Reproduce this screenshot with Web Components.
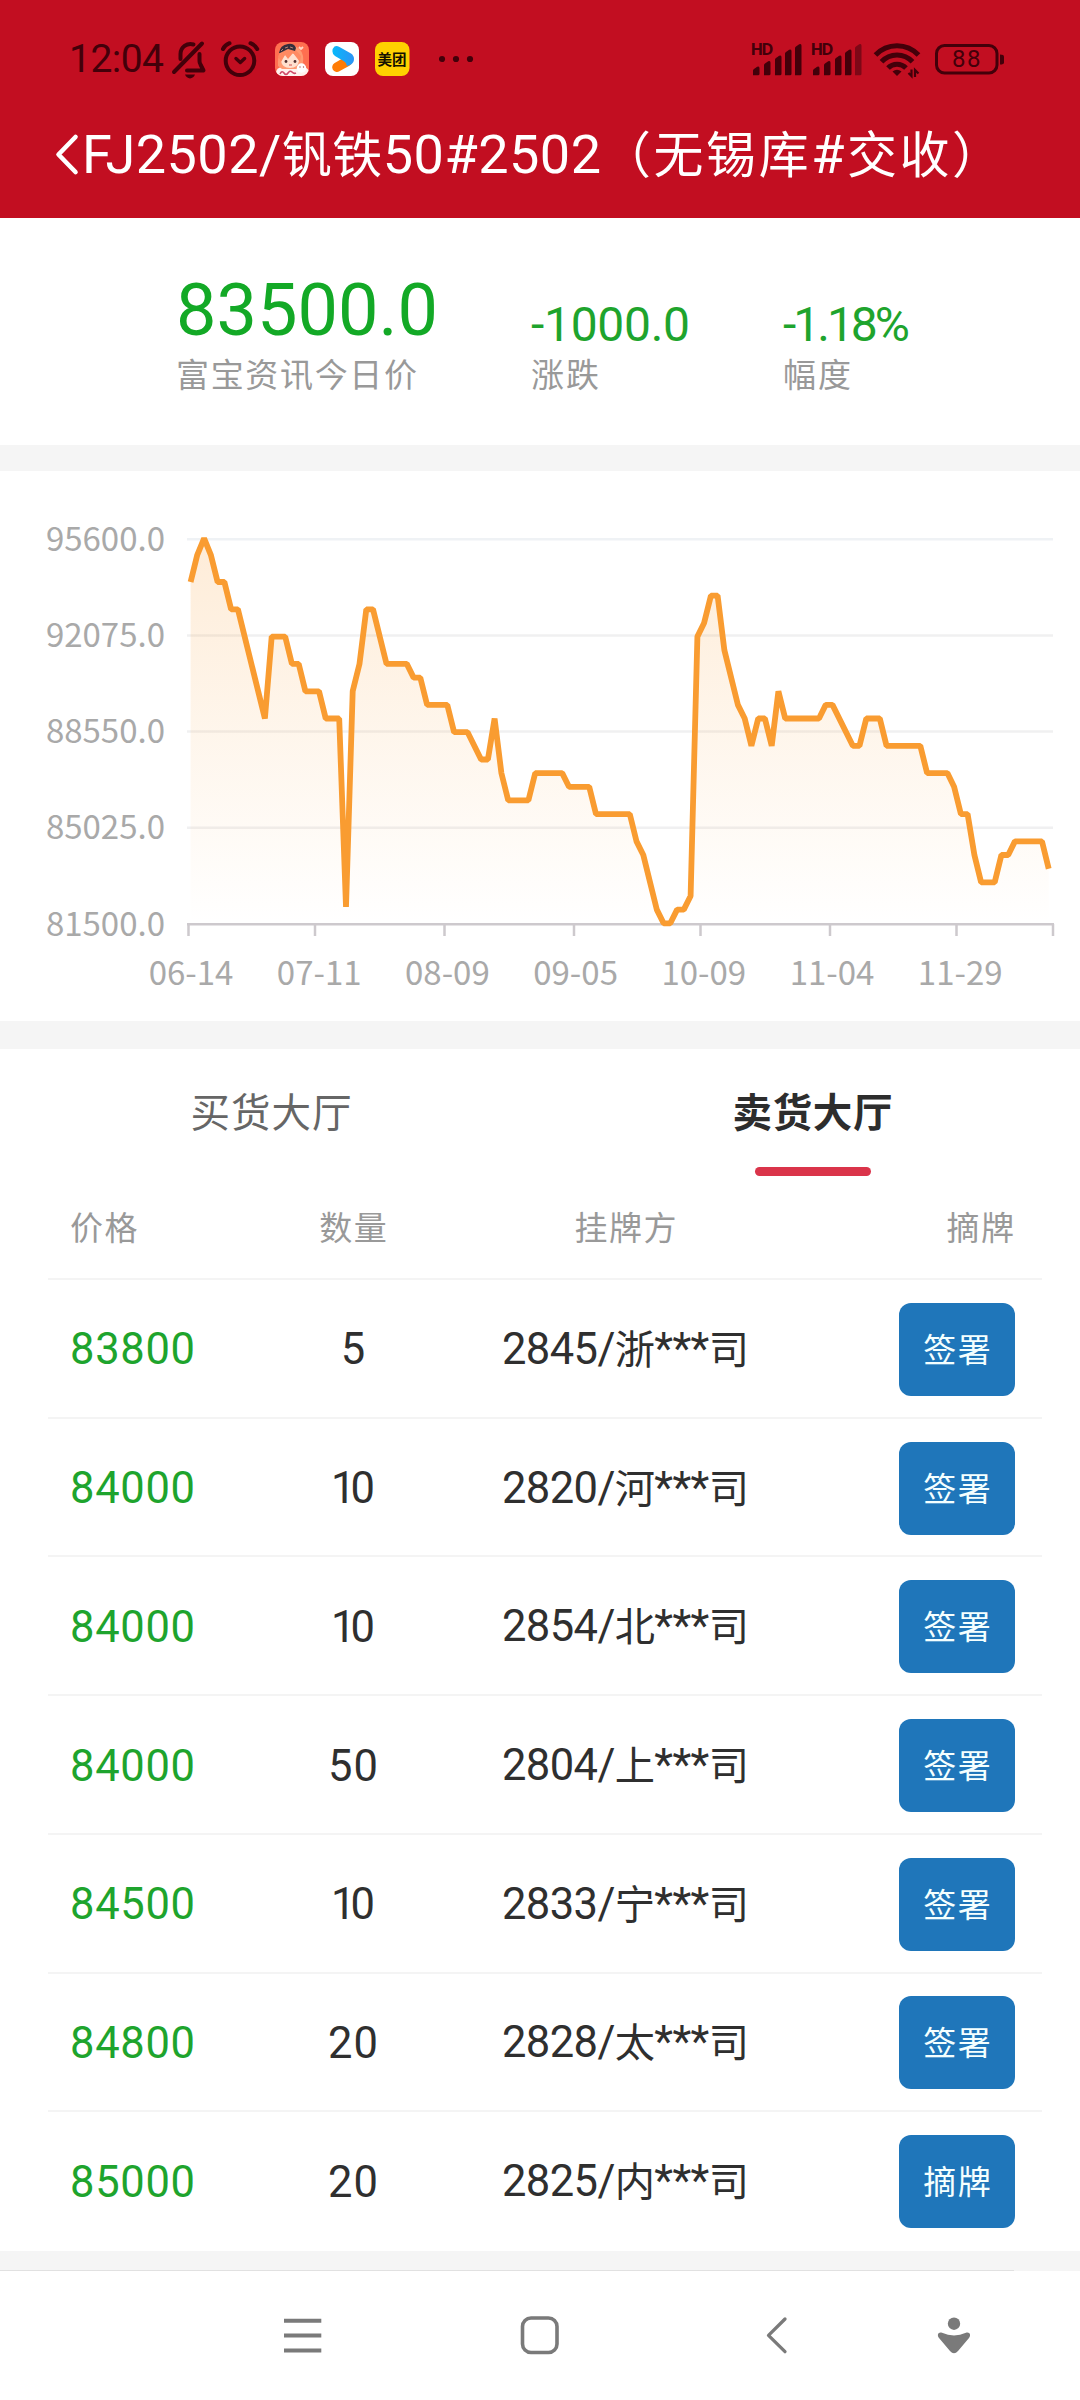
<!DOCTYPE html>
<html lang="zh-CN">
<head>
<meta charset="utf-8">
<title>FJ2502</title>
<style>
html,body{margin:0;background:#fff}
body{width:1080px;height:2400px;overflow:hidden;font-family:"Open Sans","Noto Sans CJK SC",sans-serif;color:#2f2f2f}
</style>
</head>
<body>
<app-page></app-page>
<script>
class Base extends HTMLElement {
  constructor() { super(); this.attachShadow({ mode: 'open' }); }
  render(html) { this.shadowRoot.innerHTML = html; }
}

// Text set to a given advance width by spacing its letters.
customElements.define('fit-text', class extends Base {
  connectedCallback() {
    this.render('<style>:host{display:inline-block;white-space:nowrap}span{display:inline-block}::slotted(i){font-style:normal;font-size:.925em}</style><span><slot></slot></span>');
    const w = +this.getAttribute('w'), span = this.shadowRoot.querySelector('span');
    const n = [...this.textContent].length;
    const ls = n > 1 ? (w - span.getBoundingClientRect().width) / (n - 1) : 0;
    span.style.letterSpacing = ls + 'px';
    span.style.marginRight = -ls + 'px';
  }
});

customElements.define('status-bar', class extends Base {
  connectedCallback() {
    const c = '#43000a';
    const bars = (dx, dim) => [[753,67],[764,61.5],[775,56],[785,50],[795,44.5]].map(([x, y], i) =>
      `<path d="M${x + dx} 75.2V${y + 3.5}q0-1 1-1.6l3.2-2.2q2.3-1 2.3 1.500V73.700q0 1.500-1.500 1.500z" fill="${dim && i === 4 ? '#7d0817' : c}"/>`).join('');
    const hd = dx => `<text x="${750.500 + dx}" y="55.300" font-size="16.500" font-weight="700" fill="${c}" textLength="23">HD</text>`;
    this.render(`
<style>
:host{display:flex;height:118px;align-items:flex-start;padding:0 76px 0 69px;box-sizing:border-box;color:${c}}
.time{font:39px/119px Roboto,sans-serif;width:102px;flex:none}
svg{flex:none;display:block;margin-top:38px;font-family:"Open Sans","Noto Sans CJK SC",sans-serif}
.sp{flex:1}
</style>
<div class="time"><fit-text w="95">12:04</fit-text></div>
<svg width="38" height="42" viewBox="171 38 38 42" fill="none" stroke="${c}" stroke-width="4" stroke-linecap="round" stroke-linejoin="round">
 <path d="M174 72L202 43.500M180.500 59V54a10 10 0 0 1 13-9.500M199.500 54V61q0 2 1 3.500L203.500 70.500H187"/><path d="M185 74.600h10q-1.500 3.800-5 3.800t-5-3.800z" fill="${c}" stroke="none"/></svg>
<svg width="66" height="42" viewBox="209 38 66 42" fill="none" stroke="${c}" stroke-width="4" stroke-linecap="round" stroke-linejoin="round">
 <circle cx="240" cy="60.700" r="14.300"/><path d="M223 49q2-4 6.500-5.800M250.500 43.200q4.700 1.800 6.700 5.800" /><path d="M236 58.500l4.300 4 4.300-4" stroke-width="3.400"/></svg>
<svg width="50" height="42" viewBox="275 38 50 42">
 <defs><clipPath id="a"><rect x="275" y="42" width="34" height="34" rx="8"/></clipPath></defs>
 <g clip-path="url(#a)"><rect x="275" y="42" width="34" height="34" fill="#ff6f50"/>
 <path d="M276 76q-1-9 7-9l20 0q7 1 7 9z" fill="#fff2ee"/>
 <path d="M278 66q-1-16 10-20 12-2 15 10 1 7-2 11l-5 2H282z" fill="#ff9a72"/>
 <path d="M281 61q2-7 10-8 7 1 8 8-1 7-9 7-8 0-9-7z" fill="#ffe0cf"/>
 <path d="M278 56l3 6 4-7 3 4 5-6 7 9 1-6-6-7-11 1z" fill="#ff8a62"/>
 <path d="M279 53q1-8 9-9 6-1 8 4l-1 3-7-2-8 4z" fill="#352e3c"/><path d="M281 51l2-2M285 48l3-1M290 47l3 1" stroke="#b98473" stroke-width="1"/>
 <circle cx="286" cy="61.500" r="1.400" fill="#512f30"/><circle cx="295" cy="61.500" r="1.400" fill="#512f30"/><path d="M289 65h3" stroke="#d64e4c"/>
 <circle cx="301.500" cy="68" r="4.700" fill="#fff"/><circle cx="300" cy="67" r=".7" fill="#a55"/><circle cx="303.500" cy="67" r=".7" fill="#a55"/>
 <path d="M299 47l2 2 2-2" stroke="#ffd8c8" stroke-width="1.800" fill="none"/>
 <path d="M280 74q2-4 4-1t4 0 4-1 4 1" stroke="#cf4a68" stroke-width="1.600" fill="none"/></g></svg>
<svg width="50" height="42" viewBox="325 38 50 42">
 <defs><linearGradient id="b" x1="0" x2="1"><stop offset="0" stop-color="#07b9fb"/><stop offset="1" stop-color="#2d93f4"/></linearGradient></defs>
 <rect x="325" y="42" width="34" height="34" rx="8" fill="#fff"/>
 <path d="M337 67.200L347 61.500" stroke="#ff7b05" stroke-width="9.600" stroke-linecap="round"/>
 <path d="M334.500 46.500q2-1 5 .4l11.500 6.600q3 2 3 5.500 0 4-4 6l-3 1q0-3-3-4.800l-9-5.200q-2.600-1.700-2.600-4.700t2.100-4.800z" fill="url(#b)"/></svg>
<svg width="64" height="42" viewBox="375 38 64 42"><rect x="375" y="42" width="34.500" height="34" rx="8" fill="#ffd100"/>
 <text x="377.500" y="64.500" font-size="14.500" font-weight="700" fill="#151100" textLength="29">美团</text></svg>
<svg width="36" height="42" viewBox="439 38 36 42" fill="${c}"><circle cx="442" cy="59" r="3.100"/><circle cx="456" cy="59" r="3.100"/><circle cx="470" cy="59" r="3.100"/></svg>
<div class="sp"></div>
<svg width="60" height="42" viewBox="750 38 60 42">${hd(0)}${bars(0)}</svg>
<svg width="62" height="42" viewBox="810 38 62 42">${hd(60)}${bars(60, true)}</svg>
<svg width="62" height="42" viewBox="872 38 62 42" fill="none" stroke="${c}" stroke-width="5">
 <path d="M875.500 55a29.500 29.500 0 0 1 43 0M881.500 61.800a21 21 0 0 1 31 0M888 68a12.500 12.500 0 0 1 18 0"/>
 <path d="M892.500 71.500q4.500-3.500 9 0L897 76z" fill="${c}" stroke="none"/>
 <path d="M911.500 69.500V76l-3-3M915 77v-7l3.500 3.500" stroke-width="2.200"/></svg>
<svg width="70" height="42" viewBox="934 38 70 42"><rect x="936.500" y="45.500" width="60.500" height="27.500" rx="8" fill="none" stroke="${c}" stroke-width="3"/>
 <path d="M1000 54.500q4 0 4 2v6q0 2-4 2z" fill="${c}"/><text x="952" y="67.300" font-family="Roboto" font-size="24" fill="${c}" textLength="28.500">88</text></svg>`);
  }
});

customElements.define('title-bar', class extends Base {
  connectedCallback() {
    this.render(`
<style>
:host{display:flex;height:100px;align-items:flex-start;padding-left:54px;color:#fff;font-family:Roboto,"Noto Sans CJK SC",sans-serif;font-size:54px}
svg{display:block;margin-top:14px;flex:none}
h1{margin:0;font:inherit;line-height:73px;display:flex}
</style>
<svg width="28" height="46" viewBox="54 132 28 46" fill="none" stroke="#fff" stroke-width="4.600" stroke-linecap="round" stroke-linejoin="round"><path d="M75.500 137L58.500 154.500 75.500 172"/></svg>
<h1><slot></slot></h1>`);
  }
});

customElements.define('quote-item', class extends Base {
  connectedCallback() {
    this.render(`
<style>
:host{display:flex;flex-direction:column;justify-content:flex-end;height:180px;color:#1ea42d}
.v{line-height:70px;font-size:48px;font-family:Roboto,sans-serif}
:host([big]) .v{font-size:72px;line-height:92px;color:#13a926}
.l{font-size:33px;line-height:46px;color:#999;margin-top:-8px}
:host([big]) .l{margin-top:-5px}
</style>
<div class="v"><slot></slot></div><div class="l"><slot name="label"></slot></div>`);
  }
});

customElements.define('price-chart', class extends Base {
  connectedCallback() {
    // [index, price] at each corner; the prices between are linear
    const runs = '0,94 1,95 2,95.6 3,95 4,94 5,94 6,93 7,93 11,89 12,92 14,92 15,91 16,91 17,90 19,90 20,89 22,89 23,82.100 24,90 25,91 26,93 27,93 29,91 32,91 33,90.5 34,90.5 35,89.5 38,89.5 39,88.5 41,88.5 43,87.5 44,87.5 45,89 46,87 47,86 50,86 51,87 55,87 56,86.5 59,86.5 60,85.5 65,85.5 66,84.5 67,84 69,82 70,81.5 71,81.5 72,82 73,82 74,82.5 75,92 76,92.5 77,93.5 78,93.5 79,91.5 81,89.5 82,89 83,88 84,89 85,89 86,88 87,90 88,89 93,89 94,89.5 95,89.5 98,88 99,88 100,89 102,89 103,88 108,88 109,87 112,87 113,86.5 114,85.5 115,85.5 116,84 117,83 119,83 120,84 121,84 122,84.5 126,84.5 127,83.5';
    const X = i => 187.2 + (i + .5) * 6.757, Y = v => 923.3 - (v - 81.5) * 27.3;
    const pts = runs.split(' ').map(p => { const [i, v] = p.split(',').map(Number); return X(i).toFixed(1) + ' ' + Y(v).toFixed(1); });
    const line = 'M' + pts.join('L');
    const ys = [539.3, 635.5, 731.5, 827.7, 924.3];
    this.render(`
<style>:host{display:block;height:550px}svg{display:block;font-family:"Noto Sans CJK SC",sans-serif;font-size:33px;fill:#a9a9a9}</style>
<svg width="1080" height="550" viewBox="0 471 1080 550">
<defs><linearGradient id="g" gradientUnits="userSpaceOnUse" x1="0" x2="0" y1="539" y2="924"><stop offset="0" stop-color="#f99c31" stop-opacity=".19"/><stop offset="1" stop-color="#f99c31" stop-opacity="0"/></linearGradient></defs>
${ys.slice(0, 4).map((y, i) => `<path d="M187 ${y}H1053" stroke="${i ? '#f0f0f1' : '#eff2f5'}" stroke-width="2.500"/>`).join('')}
<path d="${line}V924H${X(0)}z" fill="url(#g)"/>
<path d="M187 924.300H1054${[188.5, 315, 444.500, 574, 700.500, 830, 956.500, 1053].map(x => `M${x} 924V936`).join('')}" stroke="#cdc9cd" stroke-width="2.500" fill="none"/>
<path d="${line}" fill="none" stroke="#f99c31" stroke-width="5.800" stroke-linejoin="bevel"/>
${['95600.0', '92075.0', '88550.0', '85025.0', '81500.0'].map((t, i) => `<text x="165" y="${ys[i] + 11.700}" text-anchor="end">${t}</text>`).join('')}
${['06-14', '07-11', '08-09', '09-05', '10-09', '11-04', '11-29'].map((t, i) => `<text x="${191 + i * 128.2}" y="984.500" text-anchor="middle">${t}</text>`).join('')}
</svg>`);
  }
});

customElements.define('hall-tab', class extends Base {
  connectedCallback() {
    this.render(`
<style>
:host{display:flex;flex-direction:column;align-items:center;font-size:39.500px;color:#666;height:127px}
.t{line-height:127px;height:118px}
:host([active]){color:#2d2d2d;font-weight:700;padding-left:3px}
.bar{width:116px;height:9px;border-radius:4.500px}
:host([active]) .bar{background:#da344a}
</style>
<div class="t"><slot></slot></div><div class="bar"></div>`);
  }
});

customElements.define('order-row', class extends Base {
  connectedCallback() {
    const head = this.hasAttribute('head');
    const [p, q, n, a] = this.getAttribute('cells').split('|');
    const f = (t, w) => `<fit-text w="${w}">${t}</fit-text>`;
    this.render(`
<style>
:host{display:grid;grid-template-columns:164px 238px 307px 1fr;align-items:center;padding:3px 27px 0 22px;border-bottom:2px solid #f4f4f4;box-sizing:border-box;font-family:Roboto,"Noto Sans CJK SC",sans-serif;font-size:43.500px;flex:1}
:host([head]){font-family:"Open Sans","Noto Sans CJK SC",sans-serif;font-size:33px;color:#999;flex:none;height:104px;padding:2px 28px 0 22px}
:host([last]){border-bottom-color:transparent}
div{line-height:60px}
.p{color:#1ea42d}
:host([head]) .p{color:inherit}
.c{text-align:center}
:host(:not([head])) .p,:host(:not([head])) .c{padding-top:1px}
.a{display:flex;justify-content:flex-end}
button{all:unset;width:116px;height:93px;border-radius:12px;background:#1f76ba;color:#f4ffff;font-family:"Open Sans","Noto Sans CJK SC",sans-serif;font-size:33px;line-height:91px;text-align:center;margin-bottom:1px}
</style>
<div class="p">${head ? f(p, 67.500) : f(p, 125)}</div>
<div class="c">${head ? f(q, 67.500) : q.length > 1 ? f(q, q[0] === '1' ? 44 : 50) : q}</div>
<div class="c">${head ? f(n, 102) : f(n.replace(/([\u4e00-\u9fff])/g, '<i>$1</i>'), 247)}</div>
<div class="a">${head ? f(a, 67.500) : `<button>${f(a, 67.500)}</button>`}</div>`);
  }
});

customElements.define('nav-bar', class extends Base {
  connectedCallback() {
    this.render(`
<style>:host{display:flex;height:129px;padding:43px 0 0 284px;box-sizing:border-box}svg{display:block;flex:none}.sq{margin-left:198px}.bk{margin-left:204px}.me{margin-left:148px}</style>
<svg width="38" height="42" viewBox="284 2314 38 42" stroke="#7a7a7a" stroke-width="4"><path d="M284 2320.700h37.300M284 2335.600h37.300M284 2350.400h37.300"/></svg>
<svg class="sq" width="40" height="42" viewBox="520 2314 40 42"><rect x="522.500" y="2318" width="34.500" height="34.500" rx="8.500" fill="none" stroke="#7a7a7a" stroke-width="3.600"/></svg>
<svg class="bk" width="24" height="42" viewBox="764 2314 24 42"><path d="M785 2319L768.500 2335.300 785 2351.700" fill="none" stroke="#7a7a7a" stroke-width="3.300" stroke-linecap="round" stroke-linejoin="round"/></svg>
<svg class="me" width="36" height="42" viewBox="936 2314 36 42" fill="#7a7a7a"><circle cx="954" cy="2323.700" r="6.200"/><path d="M942 2332.800Q954 2338 966 2332.800C969.500 2331.500 971.500 2335 969 2338L958 2351Q954 2355.500 950 2351L939 2338C936.500 2335 938.500 2331.500 942 2332.800z"/></svg>`);
  }
});

customElements.define('app-page', class extends Base {
  connectedCallback() {
    const rows = ['83800|5|2845/浙***司|签署', '84000|10|2820/河***司|签署', '84000|10|2854/北***司|签署', '84000|50|2804/上***司|签署', '84500|10|2833/宁***司|签署', '84800|20|2828/太***司|签署', '85000|20|2825/内***司|摘牌'];
    this.render(`
<style>
:host{display:flex;flex-direction:column;height:2400px;width:1080px;background:#fff}
header{background:#c20e21;height:218px;flex:none}
.quote{display:flex;height:227px;flex:none;padding-left:176px}
quote-item{flex:none}
.band{flex:none;background:#f5f5f5}
.tabs{display:grid;grid-template-columns:542px 1fr;flex:none}
.head{padding:0 38px 0 48px;flex:none}
.rows{display:flex;flex-direction:column;height:971px;padding:0 38px 0 48px;flex:none}
.end{height:20px;box-sizing:border-box;display:flex;align-items:flex-end}
.end i{display:block;width:1014px;height:1.500px;background:#e1e1e1}
</style>
<header><status-bar></status-bar><title-bar><fit-text w="519">FJ2502/<i>钒铁</i>50#2502</fit-text><fit-text w="401"><i>（无锡库</i>#<i>交收）</i></fit-text></title-bar></header>
<section class="quote">
<quote-item big style="width:355px"><fit-text w="262">83500.0</fit-text><fit-text slot="label" w="241">富宝资讯今日价</fit-text></quote-item>
<quote-item style="width:252px"><fit-text w="159">-1000.0</fit-text><fit-text slot="label" w="68">涨跌</fit-text></quote-item>
<quote-item><fit-text w="127">-1.18%</fit-text><fit-text slot="label" w="68">幅度</fit-text></quote-item>
</section>
<div class="band" style="height:26px"></div>
<price-chart></price-chart>
<div class="band" style="height:28px"></div>
<div class="tabs"><hall-tab><fit-text w="161">买货大厅</fit-text></hall-tab><hall-tab active><fit-text w="160">卖货大厅</fit-text></hall-tab></div>
<div class="head"><order-row head cells="价格|数量|挂牌方|摘牌"></order-row></div>
<div class="rows">${rows.map((r, i) => `<order-row ${i === 6 ? 'last' : ''} cells="${r}"></order-row>`).join('')}</div>
<div class="band end"><i></i></div>
<nav-bar></nav-bar>`);
  }
});
</script>
</body>
</html>
